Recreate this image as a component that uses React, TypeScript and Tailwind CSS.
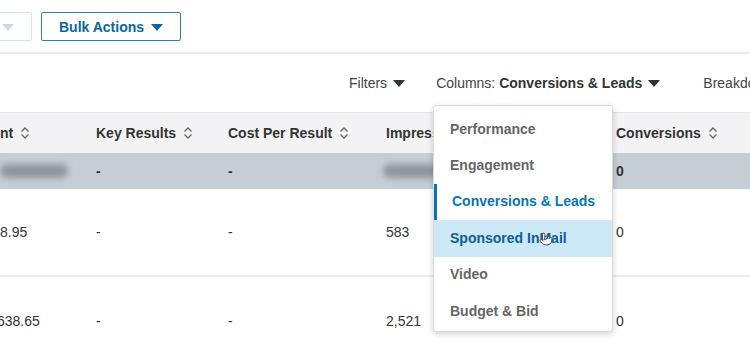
import { Pointer } from 'lucide-react'

const font = { fontFamily: '"Liberation Sans", Arial, sans-serif' }

function Caret({ className }: { className?: string }) {
  return (
    <svg width="12" height="7" viewBox="0 0 12 7" className={className}>
      <path d="M0 0 H12 L6 7 Z" fill="currentColor" />
    </svg>
  )
}

function SortIcon() {
  return (
    <svg width="10" height="14" viewBox="0 0 10 14" className="ml-[7px] text-[#666]">
      <path d="M1.5 5.5 L5 2 L8.5 5.5 M1.5 8.5 L5 12 L8.5 8.5" fill="none" stroke="currentColor" strokeWidth="1.3" />
    </svg>
  )
}

const columns = [
  { label: 'nt', width: 'w-[96px]' },
  { label: 'Key Results', width: 'w-[132px]' },
  { label: 'Cost Per Result', width: 'w-[158px]' },
  { label: 'Impressions', width: 'w-[230px]' },
  { label: 'Conversions', width: 'w-[134px]' },
]

const rows = [
  { spent: '8.95', impressions: '583', conversions: '0' },
  { spent: '638.65', impressions: '2,521', conversions: '0' },
]

const menuItems = ['Performance', 'Engagement', 'Conversions & Leads', 'Sponsored InMail', 'Video', 'Budget & Bid']

function ColumnsMenu() {
  return (
    <div className="absolute left-[433px] top-[105px] w-[180px] h-[227px] rounded-[3px] border border-[#dcdcdc] bg-white pt-[5px] shadow-[0_2px_6px_rgba(0,0,0,0.18)]">
      {menuItems.map((item) => {
        const active = item === 'Conversions & Leads'
        const hover = item === 'Sponsored InMail'
        return (
          <div
            key={item}
            className={
              'relative flex h-[36.4px] items-center text-[14px] font-bold ' +
              (active
                ? 'border-l-[3px] border-[#0a74b4] pl-[15px] text-[#0a74b4]'
                : hover
                  ? 'bg-[#cde9f7] pl-[16px] text-[#0b5f96]'
                  : 'pl-[16px] text-[#666]')
            }
          >
            {item}
            {hover && (
              <Pointer
                size={14}
                strokeWidth={1.6}
                className="absolute left-[105px] top-[12px] fill-white text-[#444]"
              />
            )}
          </div>
        )
      })}
    </div>
  )
}

export default function App() {
  return (
    <div className="relative h-[361px] w-[750px] overflow-hidden bg-white text-[#333]" style={font}>
      <div className="flex h-[54px] items-start border-b-2 border-[#ebebeb] pt-[12px]">
        <div className="flex h-[29px] w-[32px] items-center rounded-r-[2px] border border-l-0 border-[#d3e4f0] pl-[2px] pt-[2px]">
          <Caret className="text-[#c4dbeb]" />
        </div>
        <button className="ml-[9px] flex h-[29px] w-[140px] items-center justify-center gap-[7px] rounded-[2px] border border-[#2f7fb8] pt-[2px] text-[14px] font-bold text-[#0a66a3]">
          Bulk Actions
          <Caret className="text-[#0a66a3]" />
        </button>
      </div>

      <div className="flex h-[58px] items-center whitespace-nowrap text-[14px] text-[#444]">
        <div className="ml-[349px] flex items-center gap-[6px]">
          Filters
          <Caret className="text-[#333]" />
        </div>
        <div className="ml-[31px] flex items-center gap-[6px]">
          <span>
            Columns: <span className="font-bold text-[#333]">Conversions &amp; Leads</span>
          </span>
          <Caret className="text-[#333]" />
        </div>
        <div className="ml-[43px]">Breakdown</div>
      </div>

      <div className="flex h-[41px] items-center border-t border-[#e4e4e4] bg-[#f3f3f5] text-[14px] font-bold text-[#333]">
        {columns.map((c) => (
          <div key={c.label} className={'flex shrink-0 items-center ' + c.width}>
            {c.label}
            <SortIcon />
          </div>
        ))}
      </div>

      <div className="flex h-[36px] items-center bg-[#c5ced5] text-[14px] font-bold">
        <div className="w-[96px] shrink-0">
          <div className="h-[14px] w-[68px] rounded-full bg-[#8e979e] blur-[3px]" />
        </div>
        <div className="w-[132px] shrink-0">-</div>
        <div className="w-[158px] shrink-0">-</div>
        <div className="w-[230px] shrink-0">
          <div className="-ml-[3px] h-[14px] w-[56px] rounded-full bg-[#8e979e] blur-[3px]" />
        </div>
        <div className="w-[134px] shrink-0">0</div>
      </div>

      {rows.map((r, i) => (
        <div
          key={r.spent}
          className={'flex h-[88px] items-center text-[14px] ' + (i === 0 ? 'border-b-2 border-[#ececec]' : '')}
        >
          <div className="w-[96px] shrink-0 overflow-hidden">
            <span className={i === 1 ? '-ml-[3px] inline-block' : ''}>{r.spent}</span>
          </div>
          <div className="w-[132px] shrink-0">-</div>
          <div className="w-[158px] shrink-0">-</div>
          <div className="w-[230px] shrink-0">{r.impressions}</div>
          <div className="w-[134px] shrink-0">{r.conversions}</div>
        </div>
      ))}

      <ColumnsMenu />
    </div>
  )
}
